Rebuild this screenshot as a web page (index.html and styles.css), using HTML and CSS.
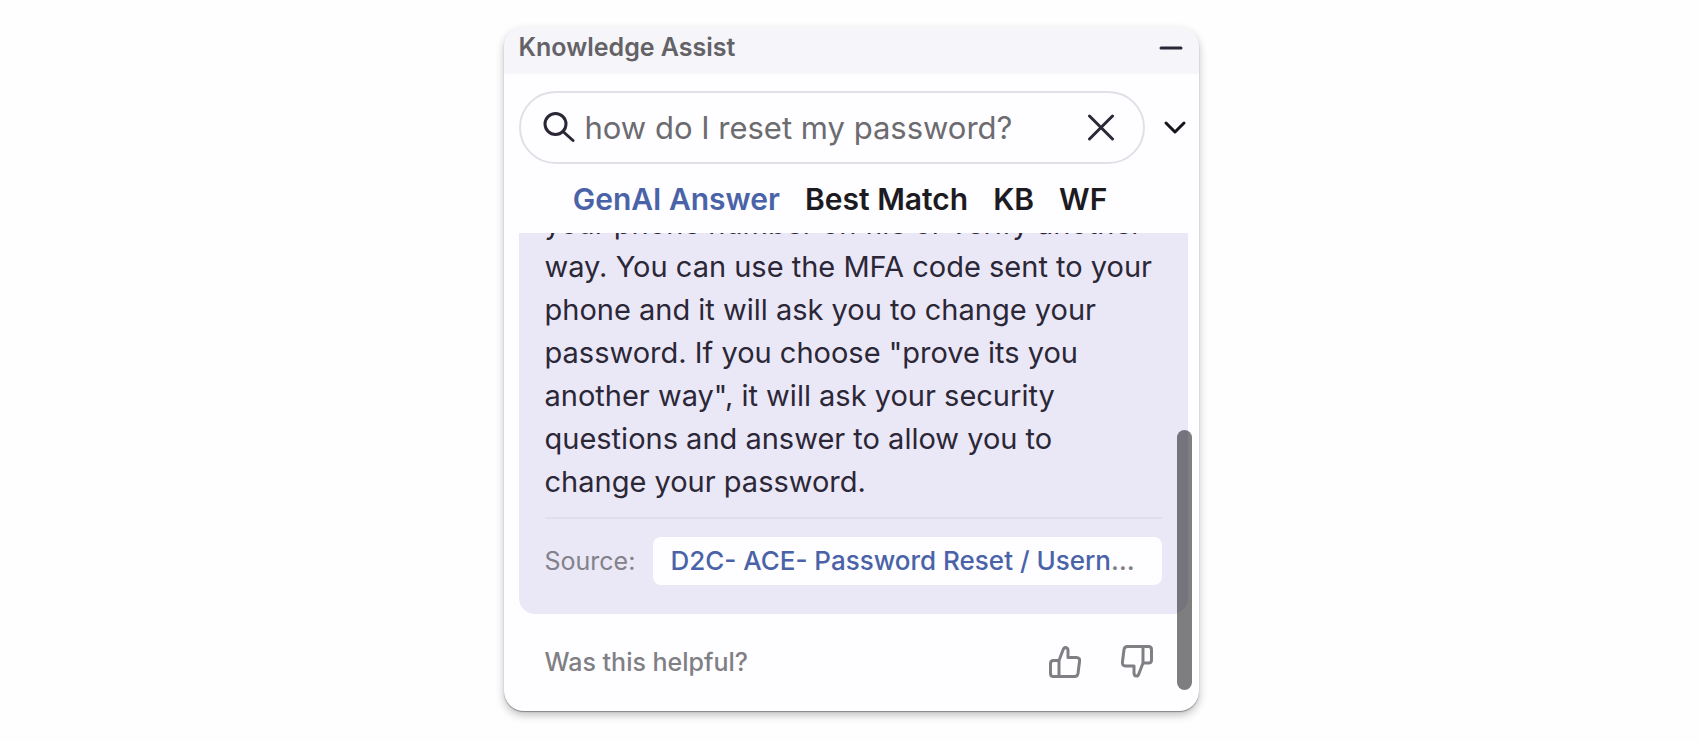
FILE: index.html
```html
<!DOCTYPE html>
<html lang="en">
<head>
    <meta charset="UTF-8">
    <meta name="viewport" content="width=device-width, initial-scale=1.0">
    <title>Knowledge Assist</title>
    <link rel="stylesheet" href="styles.css">
</head>
<body>
    <main class="panel">
        <header class="panel-header">
            <h1>Knowledge Assist</h1>
            <button class="icon-button" type="button" aria-label="Minimize">
                <svg width="24" height="24" viewBox="0 0 24 24"><path d="M2 13h20"/></svg>
            </button>
        </header>

        <form class="search-row">
            <div class="search-box">
                <svg class="search-icon" width="32" height="32" viewBox="0 0 32 32"><circle cx="12.5" cy="12" r="10.5"/><path d="M20 19.5l10 9"/></svg>
                <input class="search-input" type="text" aria-label="Search" value="how do I reset my password?">
                <button class="icon-button" type="button" aria-label="Clear search">
                    <svg width="28" height="28" viewBox="0 0 28 28"><path d="M2.5 2l23 23M25.5 2l-23 23"/></svg>
                </button>
            </div>
            <button class="icon-button" type="button" aria-label="More options">
                <svg class="chevron" width="24" height="24" viewBox="0 0 24 24"><path d="M3 7l9 9 9-9"/></svg>
            </button>
        </form>

        <nav class="tabs">
            <button class="tab active" type="button">GenAI Answer</button>
            <button class="tab" type="button">Best Match</button>
            <button class="tab" type="button">KB</button>
            <button class="tab" type="button">WF</button>
        </nav>

        <section class="results">
            <article class="answer">
                <p class="answer-text">your phone number on file or verify another way. You can use the MFA code sent to your phone and it will ask you to change your password. If you choose "prove its you another way", it will ask your security questions and answer to allow you to change your password.</p>
                <div class="source">
                    <span class="source-label">Source:</span>
                    <div class="source-link"><a href="#">D2C- ACE- Password Reset / Username Recovery</a></div>
                </div>
            </article>
            <footer class="feedback">
                <span>Was this helpful?</span>
                <div class="votes">
                    <button class="icon-button" type="button" aria-label="Helpful">
                        <svg width="34" height="34" viewBox="0 0 34 34"><path d="M11 15.5L15 5Q15.8 2.3 17.6 2.4Q20 2.7 20 5.5V12.5H28.5Q32 12.6 31.6 16L30 28.5Q29.5 31.5 26.5 31.5H5.5Q2.5 31.5 2.5 28.5V18.5Q2.5 15.5 5.5 15.5H11V31.5"/></svg>
                    </button>
                    <button class="icon-button" type="button" aria-label="Not helpful">
                        <svg width="34" height="34" viewBox="0 0 34 34"><path d="M23 18L19 28.5Q18.2 31.2 16.4 31.1Q14 30.8 14 28V21H5.5Q2 20.9 2.4 17.5L4 4.5Q4.5 1.5 7.5 1.5H28.5Q31.5 1.5 31.5 4.5V15Q31.5 18 28.5 18H23V1.5"/></svg>
                    </button>
                </div>
            </footer>
            <div class="scroll-thumb"></div>
        </section>
    </main>
</body>
</html>
```
FILE: styles.css
```css
* {
    box-sizing: border-box;
}

body {
    margin: 0;
    height: 100vh;
    padding: 27px 14px 31px 16px;
    background: #fefefe;
    font-family: 'Inter', sans-serif;
    font-optical-sizing: none;
    color: #2b2737;
}

.panel {
    display: flex;
    flex-direction: column;
    max-width: 695px;
    height: 100%;
    margin: 0 auto;
    background: #fefdff;
    border-radius: 20px;
    box-shadow: 0 1px 1px rgba(0, 0, 0, 0.35), 0 4px 8px rgba(0, 0, 0, 0.25);
    overflow: hidden;
}

.panel-header {
    display: flex;
    justify-content: space-between;
    align-items: center;
    height: 47px;
    padding: 0 16px 8px 15px;
    background: #f6f5fa;
}

h1 {
    margin: 0;
    font-size: 25px;
    line-height: 40px;
    font-weight: 600;
    color: #636267;
}

button {
    padding: 0;
    border: none;
    background: none;
    font-family: inherit;
    color: inherit;
    cursor: pointer;
}

.icon-button {
    display: flex;
    flex: none;
}

svg {
    fill: none;
    stroke: currentColor;
    stroke-width: 3;
    stroke-linecap: round;
    stroke-linejoin: round;
}

.search-row {
    display: flex;
    align-items: center;
    gap: 18px;
    padding: 17px 12px 0 15px;
}

.search-box {
    display: flex;
    flex: 1;
    align-items: center;
    gap: 10px;
    min-width: 0;
    height: 73px;
    padding: 0 28px 0 22px;
    border: 2px solid #e1e0e6;
    border-radius: 37px;
}

.search-icon {
    flex: none;
}

.search-input {
    flex: 1;
    min-width: 0;
    padding: 0;
    border: none;
    outline: none;
    background: none;
    font-family: inherit;
    font-size: 31px;
    color: #6c6b70;
}

.chevron {
    color: #17151c;
}

.tabs {
    display: flex;
    justify-content: center;
    align-items: center;
    gap: 25px;
    height: 69px;
    padding-right: 22px;
}

.tab {
    font-size: 30px;
    line-height: 36px;
    font-weight: 600;
    color: #1d1b22;
}

.tab.active {
    color: #4a63a8;
}

/* kept at the end of the answer, older lines run off the top */
.results {
    position: relative;
    display: flex;
    flex: 1;
    flex-direction: column;
    justify-content: flex-end;
    min-height: 0;
    padding: 0 11px 0 15px;
    overflow: hidden;
}

.answer {
    flex: none;
    padding: 0 26px 29px;
    background: #eae7f7;
    border-radius: 16px;
}

.answer-text {
    margin: 0;
    padding-bottom: 14px;
    font-size: 29px;
    line-height: 43px;
}

.source {
    display: flex;
    align-items: center;
    gap: 18px;
    padding-top: 18px;
    border-top: 2px solid #e0deee;
}

.source-label {
    font-size: 25px;
    color: #838189;
}

.source-link {
    flex: 1;
    min-width: 0;
    padding: 0 24px 0 17px;
    background: #fefdff;
    border-radius: 8px;
    font-size: 26px;
    font-weight: 500;
    line-height: 48px;
    color: #838189;
    white-space: nowrap;
    overflow: hidden;
    text-overflow: ellipsis;
}

.source-link a {
    color: #4a63a8;
    text-decoration: none;
}

.feedback {
    display: flex;
    flex: none;
    justify-content: space-between;
    align-items: center;
    height: 97px;
    padding: 0 34px 2px 26px;
    font-size: 25px;
    font-weight: 500;
    color: #807f84;
}

.votes {
    display: flex;
    gap: 38px;
}

.scroll-thumb {
    position: absolute;
    right: 7px;
    bottom: 21px;
    width: 15px;
    height: 260px;
    border-radius: 8px;
    background: rgba(0, 0, 0, 0.5);
}
```
